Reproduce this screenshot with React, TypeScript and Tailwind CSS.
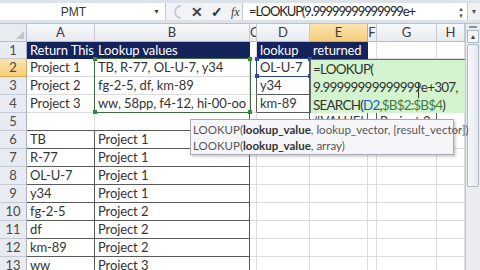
import React from "react";

type Cell = {
  t?: string;
  navy?: boolean;
  r?: boolean; // dark right border
  b?: boolean; // dark bottom border
};

const cols = [68, 155, 7, 53, 58, 9, 60, 28];
const colNames = ["A", "B", "C", "D", "E", "F", "G", "H"];

const sheet: Cell[][] = [
  [
    { t: "Return This", navy: true },
    { t: "Lookup values", navy: true },
    {},
    { t: "lookup", navy: true },
    { t: "returned", navy: true },
    {},
    {},
    {},
  ],
  [{ t: "Project 1" }, { t: "TB, R-77, OL-U-7, y34" }, { r: true }, { t: "OL-U-7", r: true, b: true }, {}, {}, {}, {}],
  [{ t: "Project 2" }, { t: "fg-2-5, df, km-89" }, { r: true }, { t: "y34", r: true, b: true }, {}, {}, {}, {}],
  [{ t: "Project 3" }, { t: "ww, 58pp, f4-12, hi-00-oo" }, { r: true }, { t: "km-89", r: true, b: true }, { b: true }, {}, { b: true }, {}],
  [{ b: true }, { b: true, r: true }, {}, { r: true }, { t: "#VALUE!", r: true, b: true }, { r: true }, { t: "Project 3", r: true, b: true }, {}],
];

const lower: [string, string][] = [
  ["TB", "Project 1"],
  ["R-77", "Project 1"],
  ["OL-U-7", "Project 1"],
  ["y34", "Project 1"],
  ["fg-2-5", "Project 2"],
  ["df", "Project 2"],
  ["km-89", "Project 2"],
  ["ww", "Project 3"],
];
lower.forEach(([a, b]) => {
  sheet.push([{ t: a, r: true, b: true }, { t: b, r: true, b: true }, {}, {}, {}, {}, {}, {}]);
});

const GridCell = ({ c, w }: { c: Cell; w: number }) => (
  <div
    style={{ width: w }}
    className={
      "h-full shrink-0 overflow-hidden whitespace-nowrap pl-[3px] border-r border-b " +
      (c.navy ? "bg-[#14235c] text-white border-[#14235c] " : "text-[#333] ") +
      (c.navy ? "" : c.r ? "border-r-[#5a5a5a] " : "border-r-[#dcdcdf] ") +
      (c.navy ? "" : c.b ? "border-b-[#5a5a5a]" : "border-b-[#dcdcdf]")
    }
  >
    {c.t}
  </div>
);

const App = () => {
  return (
    <div className="w-[480px] h-[270px] overflow-hidden bg-white relative font-['Lato',sans-serif]">
      {/* formula bar */}
      <div className="h-[24px] flex bg-[#dde2e8] pt-[3px] pb-[3px] border-b border-[#b9c0ca]">
        <div className="w-[166px] bg-white flex items-center relative border-r border-[#c3c9d2]">
          <span className="flex-1 text-center text-[12px] text-[#333] font-['Liberation_Sans',sans-serif] pr-[6px]">PMT</span>
          <span className="w-[12px] text-[7px] text-[#444]">▼</span>
        </div>
        <div className="w-[76px] flex items-center gap-[8px] pl-[5px] bg-[#f1f3f6]">
          <svg width="12" height="14" viewBox="0 0 12 14">
            <path d="M10 1 A6 6 0 0 0 10 13" fill="none" stroke="#c7ccd3" strokeWidth="2" />
          </svg>
          <span className="text-[14px] leading-none text-[#444] font-bold">✕</span>
          <span className="text-[14px] leading-none text-[#333] font-bold">✓</span>
          <span className="text-[12px] italic text-[#333] font-['Liberation_Serif',serif]">fx</span>
        </div>
        <div className="flex-1 bg-white flex items-center pl-[6px] border-l border-[#c3c9d2] text-[13px] tracking-[-1.1px] text-[#222]">
          =LOOKUP(9.99999999999999e+
        </div>
        <div className="w-[12px] bg-white flex flex-col items-center justify-center text-[6px] leading-[7px] text-[#555]">
          <span>▲</span>
          <span>▼</span>
        </div>
        <div className="w-[13px] bg-[#eef1f5] flex items-center justify-center text-[7px] text-[#555] border-l border-[#c3c9d2]">▼</div>
      </div>

      <div className="flex">
        <div className="relative">
          {/* column header */}
          <div className="h-[18px] flex text-[13px] text-[#3c3c3c] leading-[17px]">
            <div className="w-[27px] shrink-0 bg-[#e8ebf0] border-r border-b border-[#b5bcc7] relative">
              <span className="absolute right-[2px] bottom-[2px] w-0 h-0 border-l-[8px] border-l-transparent border-b-[8px] border-b-[#c0c6ce]" />
            </div>
            {cols.map((w, i) => (
              <div
                key={i}
                style={{ width: w }}
                className={
                  "shrink-0 text-center border-r border-b overflow-hidden " +
                  (i === 4
                    ? "bg-gradient-to-b from-[#fbe3b0] to-[#f6cd7a] border-[#d9a94d]"
                    : "bg-gradient-to-b from-[#f7f8fa] to-[#e7eaef] border-[#c5cad2] border-b-[#b5bcc7]")
                }
              >
                {colNames[i]}
              </div>
            ))}
          </div>
          {/* rows */}
          {sheet.map((row, ri) => (
            <div key={ri} className={"flex text-[13px] tracking-[-0.1px] " + (ri === 0 ? "h-[17px] leading-[16px]" : "h-[18px] leading-[17px]")}>
              <div
                className={
                  "w-[27px] shrink-0 text-center text-[13px] tracking-normal text-[#4a4a4a] border-r border-b " +
                  (ri === 1
                    ? "bg-gradient-to-b from-[#fbe3b0] to-[#f6cd7a] border-[#d9a94d]"
                    : "bg-[#e8ebf1] border-[#c5cad2] border-r-[#a9b1bd]")
                }
              >
                {ri + 1}
              </div>
              {row.map((c, ci) => (
                <GridCell key={ci} c={c} w={cols[ci]} />
              ))}
            </div>
          ))}

          {/* range highlight B2:B4 */}
          <div className="absolute left-[94px] top-[34px] w-[157px] h-[55px] border border-[#3d6b3d]">
            <span className="absolute -left-[2px] -top-[2px] w-[4px] h-[4px] bg-[#2f8f2f]" />
            <span className="absolute -right-[2px] -top-[2px] w-[4px] h-[4px] bg-[#2f8f2f]" />
            <span className="absolute -left-[2px] -bottom-[2px] w-[4px] h-[4px] bg-[#2f8f2f]" />
            <span className="absolute -right-[2px] -bottom-[2px] w-[4px] h-[4px] bg-[#2f8f2f]" />
          </div>
          {/* range highlight D2 */}
          <div className="absolute left-[256px] top-[34px] w-[55px] h-[19px] border border-[#2a45a8]">
            <span className="absolute -left-[2px] -top-[2px] w-[4px] h-[4px] bg-[#2a45a8]" />
            <span className="absolute -right-[2px] -top-[2px] w-[4px] h-[4px] bg-[#2a45a8]" />
            <span className="absolute -left-[2px] -bottom-[2px] w-[4px] h-[4px] bg-[#2a45a8]" />
            <span className="absolute -right-[2px] -bottom-[2px] w-[4px] h-[4px] bg-[#2a45a8]" />
          </div>

          {/* in-cell editor E2 */}
          <div className="absolute left-[310px] top-[35px] w-[155px] h-[54px] bg-[#d3f4cf] border-l border-t border-[#6b6b6b] pl-[2px] text-[13.5px] leading-[18px] text-[#333] tracking-[-0.8px] whitespace-nowrap">
            <div>=LOOKUP(</div>
            <div>9.99999999999999e+307,</div>
            <div>
              SEARCH(<span className="text-[#2a5bb8]">D2</span>,<span className="text-[#3f7d3f]">$B$2:$B$4</span>)
            </div>
            <span className="absolute left-[107px] top-[22px] w-px h-[16px] bg-[#333]" />
          </div>

          {/* tooltip */}
          <div className="absolute left-[190px] top-[95px] w-[264px] h-[36px] bg-[#f6f6fa] border border-[#a9a9b3] shadow-[2px_2px_2px_rgba(0,0,0,0.18)] px-[2px] pt-[2px] text-[11.5px] leading-[16px] text-[#575757] whitespace-nowrap">
            <div>
              LOOKUP(<b className="text-[#333]">lookup_value</b>, lookup_vector, [result_vector])
            </div>
            <div>
              LOOKUP(<b className="text-[#333]">lookup_value</b>, array)
            </div>
          </div>
        </div>

        {/* vertical scrollbar */}
        <div className="flex-1 h-[246px] bg-[#e9ecf1] border-l border-[#c2c8d0] flex flex-col">
          <div className="h-[6px] flex items-center justify-center">
            <span className="w-[8px] h-[2px] bg-[#8a93a0]" />
          </div>
          <div className="h-[13px] mx-[1px] bg-[#f3f5f8] border border-[#aeb6c2] flex items-center justify-center text-[7px] text-[#444]">▲</div>
          <div className="h-[143px] mx-[1px] mt-[1px] bg-gradient-to-r from-[#f8f9fb] to-[#e4e8ee] border border-[#aeb6c2] rounded-[2px]" />
        </div>
      </div>
    </div>
  );
};

export default App;
